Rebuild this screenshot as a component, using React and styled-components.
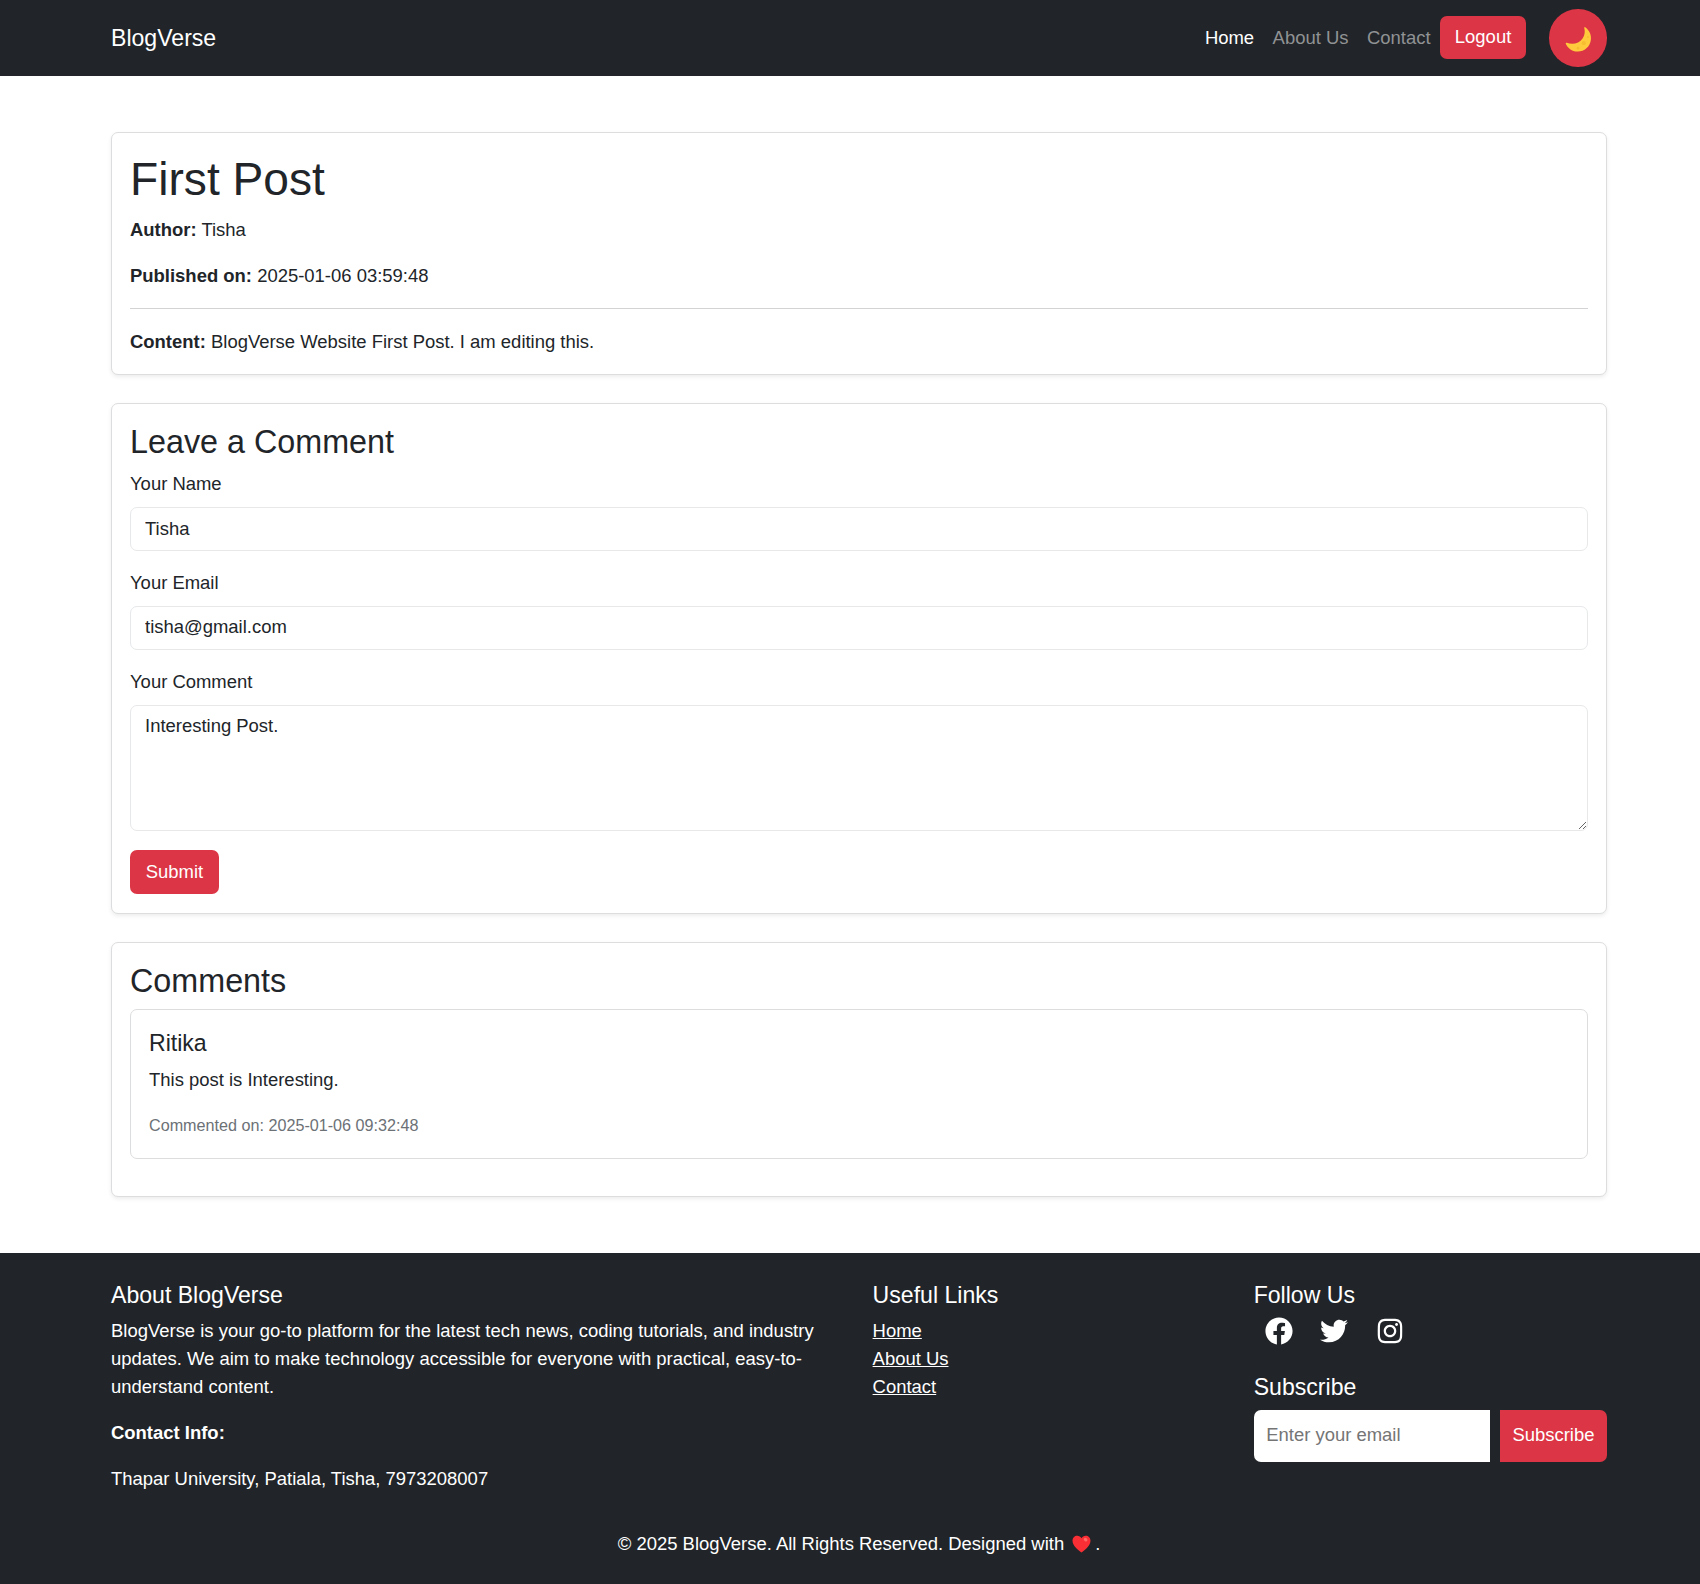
import React from "react";
import styled, { createGlobalStyle, css } from "styled-components";
import { FaFacebook, FaTwitter, FaInstagram } from "react-icons/fa";

const GlobalStyle = createGlobalStyle`
  *, *::before, *::after { box-sizing: border-box; }
  html { font-size: 18.47px; }
  body {
    margin: 0;
    background: #fff;
    color: #212529;
    font-family: "Liberation Sans", Arial, sans-serif;
    font-size: 1rem;
    line-height: 1.5;
    overflow: hidden;
  }
`;

const Page = styled.div`
  width: 1718px;
`;

const Container = styled.div`
  width: 1496px;
  margin: 0 auto;
`;

const Navbar = styled.nav`
  background: #212529;
  padding: 9.4px 0 9.3px;
`;

const NavInner = styled(Container)`
  display: flex;
  align-items: center;
`;

const Brand = styled.a`
  margin-right: auto;
  padding-top: 1px;
  font-size: 1.25rem;
  color: #fff;
`;

const NavLink = styled.a`
  padding: 0.5rem;
  color: ${(p) => (p.$active ? "#fff" : "#909294")};
`;

const buttonBase = css`
  border: 0;
  background: #dc3545;
  color: #fff;
  font: inherit;
`;

const Button = styled.button`
  ${buttonBase}
  height: ${(p) => p.$height || 43.4}px;
  width: ${(p) => p.$width}px;
  padding: 0;
  border-radius: 7px;
`;

const LogoutButton = styled(Button)`
  margin: 0 23px 2px 0;
`;

const ThemeButton = styled.button`
  ${buttonBase}
  display: flex;
  align-items: center;
  justify-content: center;
  width: 57.7px;
  height: 57.7px;
  padding: 2px 0 0 1px;
  border-radius: 50%;
`;

const Main = styled(Container)`
  padding: 3rem 0;
  display: flex;
  flex-direction: column;
  gap: 1.5rem;
`;

const Card = styled.section`
  border: 1px solid #dcddde;
  border-radius: 7px;
  padding: 18.6px 18px;
  background: #fff;
  box-shadow: ${(p) => (p.$flat ? "none" : "0 2px 4px rgba(0, 0, 0, 0.075)")};
  margin-bottom: ${(p) => (p.$flat ? "1rem" : "0")};
`;

const headingSizes = { h1: "2.5rem", h3: "1.75rem", h5: "1.25rem" };

const Heading = styled.h2`
  margin: 0 0 calc(0.5rem - 1px);
  padding-top: 1px;
  font-size: ${(p) => headingSizes[p.$size]};
  font-weight: 400;
  line-height: 1.2;
`;

const Text = styled.p`
  margin: 0 0 ${(p) => (p.$last ? "0" : "1rem")};
`;

const Small = styled.small`
  display: block;
  font-size: 0.875em;
  line-height: 1.5rem;
  color: #6c7176;
`;

const Rule = styled.hr`
  margin: 0 0 1rem;
  border: 0;
  border-top: 1px solid #d2d3d4;
`;

const Field = styled.div`
  margin-bottom: 1rem;
`;

const Label = styled.label`
  display: block;
  margin-bottom: 0.5rem;
`;

const control = css`
  display: block;
  width: 100%;
  border: 1px solid #e6e8ea;
  border-radius: 7px;
  padding: 6px 14px 7px;
  background: #fff;
  color: #212529;
  font: inherit;
  outline: none;
`;

const Input = styled.input`
  ${control}
  height: 43.4px;
`;

const TextArea = styled.textarea`
  ${control}
  height: 126.4px;
  resize: vertical;
`;

const Footer = styled.footer`
  background: #212529;
  color: #fff;
  padding: 1.5rem 0 2rem;
  min-height: 334px;
`;

const Columns = styled(Container)`
  display: grid;
  grid-template-columns: 734px 353.5px 353.5px;
  column-gap: 27.6px;
`;

const LinkList = styled.ul`
  list-style: none;
  margin: 0;
  padding: 0;
`;

const FooterLink = styled.a`
  color: #fff;
  text-decoration: underline;
`;

const Socials = styled.div`
  display: flex;
  align-items: center;
  gap: 27.5px;
  height: 27.7px;
  margin-bottom: 27.7px;
  padding-left: 11.3px;
  font-size: 28px;
`;

const SubscribeForm = styled.div`
  display: flex;
  gap: 10px;
  height: 52.7px;
`;

const EmailInput = styled.input`
  flex: 1;
  min-width: 0;
  border: 0;
  border-radius: 7px 0 0 7px;
  padding: 0 12.5px 2px;
  background: #fff;
  font: inherit;
  &::placeholder { color: #757575; opacity: 1; }
`;

const SubscribeButton = styled.button`
  ${buttonBase}
  width: 107.5px;
  padding: 0 0 2px;
  border-radius: 0 7px 7px 0;
`;

const Copyright = styled.p`
  display: flex;
  align-items: center;
  justify-content: center;
  margin: 1rem 0 0;
`;

const HeartIcon = styled.svg`
  margin: 1px 4px 0 8px;
`;

const Moon = () => (
  <svg width="27" height="27" viewBox="0 0 28 28" aria-hidden="true">
    <path d="M21 1.2C25.5 4.600 27.600 9.300 26.800 14.500C25.800 21.800 19.700 26.800 12.800 26.500C7.200 26.200 2.600 22.700.8 18.300C.6 17.600 1.200 17.200 1.900 17.400C7.800 19.700 14.800 18.200 18.400 12.600C20.700 9 20.900 5.500 20 2C19.800 1.200 20.400.8 21 1.200Z" fill="#ffcb3d" />
    <circle cx="19.500" cy="17.800" r="2.200" fill="#f7bd31" />
    <circle cx="13.500" cy="23" r="1.500" fill="#f7bd31" />
    <circle cx="23.800" cy="11.500" r="1.100" fill="#f7bd31" />
  </svg>
);

const Heart = () => (
  <HeartIcon width="19" height="18" viewBox="0 0 19 18" aria-hidden="true">
    <path d="M9.500 17.500C6 15.200.5 10.500.5 5.800C.5 2.700 2.700.7 5.200.7C7.100.7 8.700 1.700 9.500 3.300C10.300 1.700 11.900.7 13.800.7C16.300.7 18.500 2.700 18.500 5.800C18.500 10.500 13 15.200 9.500 17.500Z" fill="#f92f35" />
    <ellipse cx="13.600" cy="4.600" rx="2" ry="1.600" fill="#ff6a66" transform="rotate(35 13.600 4.600)" />
  </HeartIcon>
);

export default function App() {
  return (
    <Page>
      <GlobalStyle />
      <Navbar>
        <NavInner>
          <Brand>BlogVerse</Brand>
          <NavLink $active>Home</NavLink>
          <NavLink>About Us</NavLink>
          <NavLink>Contact</NavLink>
          <LogoutButton $width={86.5}>Logout</LogoutButton>
          <ThemeButton aria-label="Toggle theme"><Moon /></ThemeButton>
        </NavInner>
      </Navbar>

      <Main as="main">
        <Card>
          <Heading as="h1" $size="h1">First Post</Heading>
          <Text><strong>Author:</strong> Tisha</Text>
          <Text><strong>Published on:</strong> 2025-01-06 03:59:48</Text>
          <Rule />
          <Text $last><strong>Content:</strong> BlogVerse Website First Post. I am editing this.</Text>
        </Card>

        <Card>
          <Heading $size="h3">Leave a Comment</Heading>
          <Field>
            <Label htmlFor="name">Your Name</Label>
            <Input id="name" defaultValue="Tisha" />
          </Field>
          <Field>
            <Label htmlFor="email">Your Email</Label>
            <Input id="email" defaultValue="tisha@gmail.com" />
          </Field>
          <Field>
            <Label htmlFor="comment">Your Comment</Label>
            <TextArea id="comment" defaultValue="Interesting Post." />
          </Field>
          <Button $width={89} $height={44.6}>Submit</Button>
        </Card>

        <Card>
          <Heading $size="h3">Comments</Heading>
          <Card as="article" $flat>
            <Heading as="h5" $size="h5">Ritika</Heading>
            <Text>This post is Interesting.</Text>
            <Small>Commented on: 2025-01-06 09:32:48</Small>
          </Card>
        </Card>
      </Main>

      <Footer>
        <Columns>
          <div>
            <Heading as="h5" $size="h5">About BlogVerse</Heading>
            <Text>
              BlogVerse is your go-to platform for the latest tech news, coding tutorials, and industry
              updates. We aim to make technology accessible for everyone with practical, easy-to-understand
              content.
            </Text>
            <Text><strong>Contact Info:</strong></Text>
            <Text>Thapar University, Patiala, Tisha, 7973208007</Text>
          </div>
          <div>
            <Heading as="h5" $size="h5">Useful Links</Heading>
            <LinkList>
              <li><FooterLink>Home</FooterLink></li>
              <li><FooterLink>About Us</FooterLink></li>
              <li><FooterLink>Contact</FooterLink></li>
            </LinkList>
          </div>
          <div>
            <Heading as="h5" $size="h5">Follow Us</Heading>
            <Socials>
              <FaFacebook />
              <FaTwitter />
              <FaInstagram />
            </Socials>
            <Heading as="h5" $size="h5">Subscribe</Heading>
            <SubscribeForm>
              <EmailInput placeholder="Enter your email" />
              <SubscribeButton>Subscribe</SubscribeButton>
            </SubscribeForm>
          </div>
        </Columns>
        <Copyright>© 2025 BlogVerse. All Rights Reserved. Designed with<Heart />.</Copyright>
      </Footer>
    </Page>
  );
}
